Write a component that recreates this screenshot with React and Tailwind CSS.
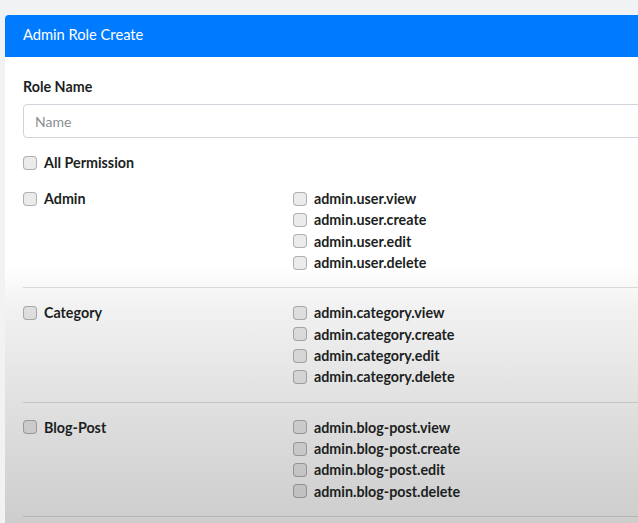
import React from 'react';

const groups = [
  { name: 'Admin', perms: ['admin.user.view', 'admin.user.create', 'admin.user.edit', 'admin.user.delete'] },
  { name: 'Category', perms: ['admin.category.view', 'admin.category.create', 'admin.category.edit', 'admin.category.delete'] },
  { name: 'Blog-Post', perms: ['admin.blog-post.view', 'admin.blog-post.create', 'admin.blog-post.edit', 'admin.blog-post.delete'] },
];

const Box = () => (
  <span className="inline-block w-[14px] h-[14px] shrink-0 rounded-[4px] border border-black/25 bg-black/[0.08]" />
);

const Check = ({ label }) => (
  <label className="flex items-center gap-[7px] h-[21.33px] font-bold text-[14.3px] text-[#1c1f22]">
    <Box />
    <span>{label}</span>
  </label>
);

export default function App() {
  return (
    <div
      className="h-[523px] overflow-hidden bg-[#f1f2f4] pt-[15px] pl-[5px]"
      style={{ fontFamily: 'Lato, "Noto Sans", sans-serif' }}
    >
      <div className="w-[700px] h-[520px] rounded-tl-[4px] overflow-hidden bg-white">
        {/* Card header */}
        <div className="h-[42px] bg-[#007bff] px-[18px] pb-[3px] flex items-center text-white text-[14.7px]">
          Admin Role Create
        </div>

        {/* Card body */}
        <div className="h-[478px] px-[18px] pt-[20px] bg-[linear-gradient(to_bottom,#ffffff_0%,#ffffff_44%,#f2f2f2_52%,#e0e0e0_73%,#cbcbcb_100%)]">
          <div className="font-bold text-[14.3px] leading-[20px] text-[#1c1f22]">Role Name</div>
          <input
            className="mt-[7px] block w-full h-[34px] rounded-[4px] border border-[#ced4da] bg-white px-[11px] text-[14px] placeholder:text-[#8a8f94] outline-none"
            placeholder="Name"
          />
          <div className="mt-[15px] flex items-center gap-[7px] h-[20px] font-bold text-[14.3px] text-[#1c1f22]">
            <Box />
            <span>All Permission</span>
          </div>

          <div className="mt-[15px]">
            {groups.map((g) => (
              <div key={g.name} className="flex border-b border-black/[0.12] pb-[14px] pt-[14px] first:pt-0">
                <div className="w-[270px] shrink-0">
                  <Check label={g.name} />
                </div>
                <div className="flex flex-col">
                  {g.perms.map((p) => (
                    <Check key={p} label={p} />
                  ))}
                </div>
              </div>
            ))}
          </div>
        </div>
      </div>
    </div>
  );
}
